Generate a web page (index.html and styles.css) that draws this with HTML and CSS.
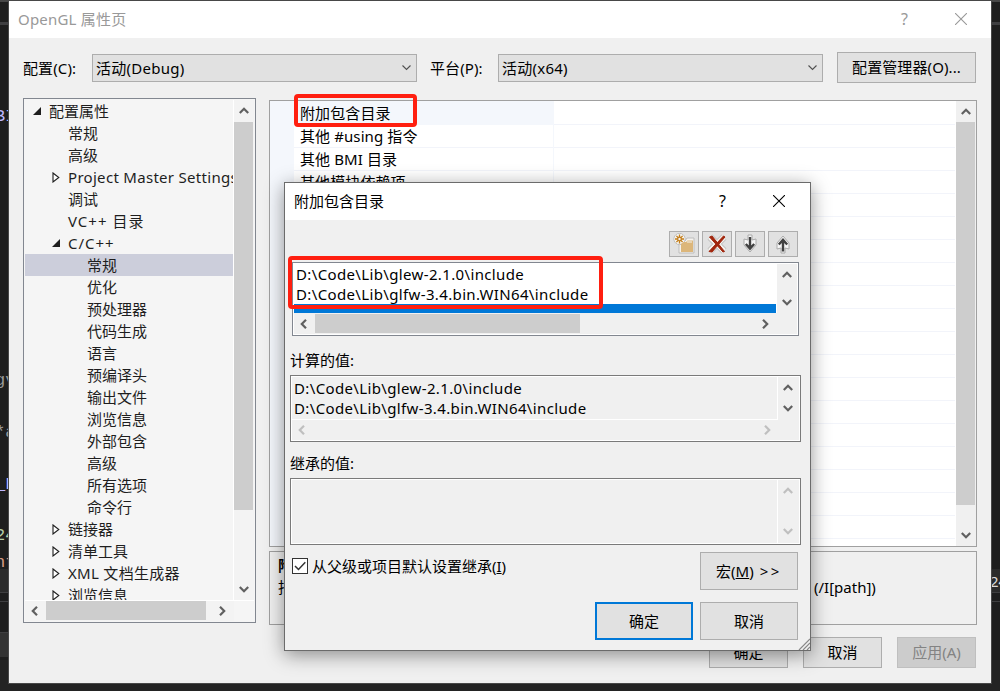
FILE: index.html
```
<!DOCTYPE html>
<html lang="zh-CN">

<head>
    <meta charset="utf-8">
    <title>OpenGL 属性页</title>
    <link rel="stylesheet" href="styles.css">
</head>

<body>
    <svg class="defs">
        <symbol id="up" viewBox="0 0 10 7"><path d="M0.8 6 L5 1.8 L9.2 6" fill="none" stroke="currentColor" stroke-width="2.2"/></symbol>
        <symbol id="down" viewBox="0 0 10 7"><path d="M0.8 1 L5 5.2 L9.2 1" fill="none" stroke="currentColor" stroke-width="2.2"/></symbol>
        <symbol id="left" viewBox="0 0 7 10"><path d="M6 0.8 L1.8 5 L6 9.2" fill="none" stroke="currentColor" stroke-width="2.2"/></symbol>
        <symbol id="right" viewBox="0 0 7 10"><path d="M1 0.8 L5.2 5 L1 9.2" fill="none" stroke="currentColor" stroke-width="2.2"/></symbol>
        <symbol id="close" viewBox="0 0 12 12"><path d="M0 0 L12 12 M12 0 L0 12" fill="none" stroke="currentColor" stroke-width="1.1"/></symbol>
        <symbol id="thin" viewBox="0 0 9 6"><path d="M0.5 0.5 L4.5 4.5 L8.5 0.5" fill="none" stroke="#505050" stroke-width="1.1"/></symbol>
        <symbol id="open" viewBox="0 0 8 8"><path d="M8 0 V8 H0 Z" fill="#1e1e1e"/></symbol>
        <symbol id="shut" viewBox="0 0 8 11"><path d="M1 1 L6.8 5.5 L1 10 Z" fill="#fff" stroke="#1e1e1e" stroke-width="1.1"/></symbol>
    </svg>

    <div class="editor">
        <div class="band band-top"></div>
        <div class="band band-tabs"></div>
        <div class="band band-status"></div>
        <div class="band band-output"></div>
        <div class="band band-foot"></div>
        <div class="band band-tool"></div>
        <span class="code c1">BI</span>
        <span class="code c2">gv</span>
        <span class="code c3">*a</span>
        <span class="code c4">_F</span>
        <span class="code c5">24</span>
        <span class="code c6">nt</span>
        <span class="code c7">24</span>
    </div>

    <div class="window main">
        <div class="titlebar">
            <span class="title">OpenGL 属性页</span>
            <span class="help">?</span>
            <svg class="close"><use href="#close"/></svg>
        </div>

        <div class="config">
            <label class="lbl-config">配置(C):</label>
            <div class="select">活动(Debug)<svg><use href="#thin"/></svg></div>
            <label class="lbl-platform">平台(P):</label>
            <div class="select">活动(x64)<svg><use href="#thin"/></svg></div>
            <div class="button manager">配置管理器(O)...</div>
        </div>

        <div class="panes">
            <div class="tree">
                <div class="tree-top">
                    <div class="items">
                        <div class="item root"><svg class="open"><use href="#open"/></svg>配置属性</div>
                        <div class="item">常规</div>
                        <div class="item">高级</div>
                        <div class="item latin"><svg class="shut"><use href="#shut"/></svg>Project Master Settings</div>
                        <div class="item">调试</div>
                        <div class="item symbols">VC++ 目录</div>
                        <div class="item symbols"><svg class="open"><use href="#open"/></svg>C/C++</div>
                        <div class="item sub selected">常规</div>
                        <div class="item sub">优化</div>
                        <div class="item sub">预处理器</div>
                        <div class="item sub">代码生成</div>
                        <div class="item sub">语言</div>
                        <div class="item sub">预编译头</div>
                        <div class="item sub">输出文件</div>
                        <div class="item sub">浏览信息</div>
                        <div class="item sub">外部包含</div>
                        <div class="item sub">高级</div>
                        <div class="item sub">所有选项</div>
                        <div class="item sub">命令行</div>
                        <div class="item"><svg class="shut"><use href="#shut"/></svg>链接器</div>
                        <div class="item"><svg class="shut"><use href="#shut"/></svg>清单工具</div>
                        <div class="item latin"><svg class="shut"><use href="#shut"/></svg>XML 文档生成器</div>
                        <div class="item"><svg class="shut"><use href="#shut"/></svg>浏览信息</div>
                    </div>
                    <div class="vscroll">
                        <svg class="v"><use href="#up"/></svg>
                        <div class="thumb"></div>
                        <svg class="v"><use href="#down"/></svg>
                    </div>
                </div>
                <div class="hscroll">
                    <svg class="h"><use href="#left"/></svg>
                    <div class="thumb"></div>
                    <svg class="h"><use href="#right"/></svg>
                </div>
            </div>

            <div class="right">
                <div class="grid">
                    <div class="gutter"></div>
                    <div class="rows">
                        <div class="row current">附加包含目录</div>
                        <div class="row">其他 #using 指令</div>
                        <div class="row">其他 BMI 目录</div>
                        <div class="row">其他模块依赖项</div>
                    </div>
                    <div class="vscroll">
                        <svg class="v"><use href="#up"/></svg>
                        <div class="thumb"></div>
                        <svg class="v"><use href="#down"/></svg>
                    </div>
                </div>
                <div class="description">
                    <b>附加包含目录</b>
                    <div class="desc-line"><span>指定</span><span>(/I[path])</span></div>
                </div>
            </div>
        </div>

        <div class="footer">
            <div class="button">确定</div>
            <div class="button">取消</div>
            <div class="button disabled">应用(A)</div>
        </div>
    </div>

    <div class="window dialog">
        <div class="titlebar">
            <span class="title">附加包含目录</span>
            <span class="help">?</span>
            <svg class="close"><use href="#close"/></svg>
        </div>

        <div class="toolbar">
            <div class="button">
                <svg viewBox="0 0 22 22">
                    <g fill="#f4f2ee" stroke="#bdbdbd" stroke-width="1"><path d="M6 8h6l2-3h7v15H6z"/><circle cx="6.5" cy="6" r="5.6"/></g>
                    <path d="M8 9h5l1.5-1.5H20V19H8z" fill="#dcb67a"/>
                    <path d="M14 9h5" stroke="#f4f2ee"/>
                    <circle cx="6.5" cy="6" r="5" fill="#f4f2ee"/>
                    <path d="M6.5 1.5v9M2 6h9M3.4 2.9l6.2 6.2M9.6 2.9l-6.2 6.2" stroke="#c27d1a" stroke-width="1.3"/>
                    <circle cx="6.5" cy="6" r="1.8" fill="#f4f2ee" stroke="#c27d1a" stroke-width="1.2"/>
                </svg>
            </div>
            <div class="button">
                <svg viewBox="0 0 22 22">
                    <path d="M4 4 L18 18 M18 4 L4 18" stroke="#b4b4b4" stroke-width="6.8"/>
                    <path d="M4 4 L18 18 M18 4 L4 18" stroke="#f4f2ee" stroke-width="5.4"/>
                    <path d="M3.5 4 L6 3 L18.5 18.5 L17 19 Z M17.5 3 L19 4 L6 19 L3 18.5 Z" fill="#a1260d" stroke="#a1260d"/>
                </svg>
            </div>
            <div class="button">
                <svg viewBox="0 0 22 22">
                    <path d="M9 2h4v5l4-1v6l-6 7l-6-7V6l4 1z" fill="#f6f6f6" stroke="#aaa"/>
                    <path d="M11 4v12M6.8 11l4.2 4.6l4.2-4.6" fill="none" stroke="#424242" stroke-width="2.4"/>
                </svg>
            </div>
            <div class="button">
                <svg viewBox="0 0 22 22">
                    <path d="M9 20h4v-5l4 1v-6l-6-7l-6 7v6l4-1z" fill="#f6f6f6" stroke="#aaa"/>
                    <path d="M11 18.5v-12M6.8 11.5l4.2-4.6l4.2 4.6" fill="none" stroke="#424242" stroke-width="2.4"/>
                </svg>
            </div>
        </div>

        <div class="listbox paths">
            <div class="list-top">
                <div class="lines">
                    <div>D:\Code\Lib\glew-2.1.0\include</div>
                    <div>D:\Code\Lib\glfw-3.4.bin.WIN64\include</div>
                    <div class="active"></div>
                </div>
                <div class="vscroll">
                    <svg class="v"><use href="#up"/></svg>
                    <svg class="v"><use href="#down"/></svg>
                </div>
            </div>
            <div class="hscroll">
                <svg class="h"><use href="#left"/></svg>
                <div class="thumb"></div>
                <svg class="h"><use href="#right"/></svg>
            </div>
        </div>

        <div class="caption">计算的值:</div>
        <div class="listbox readonly">
            <div class="list-top">
                <div class="lines">
                    <div>D:\Code\Lib\glew-2.1.0\include</div>
                    <div>D:\Code\Lib\glfw-3.4.bin.WIN64\include</div>
                </div>
                <div class="vscroll">
                    <svg class="v"><use href="#up"/></svg>
                    <svg class="v"><use href="#down"/></svg>
                </div>
            </div>
            <div class="hscroll off">
                <svg class="h"><use href="#left"/></svg>
                <svg class="h"><use href="#right"/></svg>
            </div>
        </div>

        <div class="caption caption-inherited">继承的值:</div>
        <div class="listbox readonly inherited">
            <div class="list-top">
                <div class="lines"></div>
                <div class="vscroll off">
                    <svg class="v"><use href="#up"/></svg>
                    <svg class="v"><use href="#down"/></svg>
                </div>
            </div>
        </div>

        <div class="options">
            <div class="checkbox">
                <svg viewBox="0 0 14 14"><path d="M2 7 L5.5 10.5 L12.3 3.3" fill="none" stroke="#333" stroke-width="1.5"/></svg>
            </div>
            <label>从父级或项目默认设置继承(<u>I</u>)</label>
            <div class="button">宏(<u>M</u>)<span class="more">&gt;&gt;</span></div>
        </div>
        <div class="actions">
            <div class="button default">确定</div>
            <div class="button">取消</div>
        </div>
        <svg class="grip" viewBox="0 0 12 12"><path d="M1 12 L12 1 M5 12 L12 5 M9 12 L12 9" stroke="#888" stroke-width="1.2"/></svg>
    </div>

    <div class="mark mark-property"></div>
    <div class="mark mark-paths"></div>
</body>

</html>
```

FILE: styles.css
```
* {
    box-sizing: border-box;
}

body {
    margin: 0;
    width: 1000px;
    height: 691px;
    position: relative;
    overflow: hidden;
    background-color: #1e1e1e;
    color: #000000;
    font-family: "Noto Sans", "Noto Sans CJK SC", sans-serif;
    font-size: 15px;
    line-height: 20px;
    white-space: nowrap;
}

svg {
    display: block;
    flex: none;
}

.defs {
    position: absolute;
    width: 0;
    height: 0;
}

/* editor behind the windows */
.band {
    position: absolute;
    left: 0;
    width: 1000px;
}

.band-top {
    top: 0;
    height: 2px;
    background-color: #474747;
}

.band-tabs {
    top: 22px;
    height: 3px;
    background-color: #3f3f41;
}

.band-status {
    top: 569px;
    height: 24px;
    background-color: #2b2b2b;
    border-bottom: 1px solid #3f3f41;
}

.band-output {
    top: 601px;
    height: 31px;
    background-color: #1e1e1e;
    border-top: 1px solid #3f3f41;
}

.band-foot {
    top: 660px;
    height: 31px;
    background-color: #232323;
}

.band-tool {
    top: 632px;
    width: 9px;
    height: 25px;
    background-color: #333333;
    border-top: 1px solid #3f3f41;
}

.code {
    position: absolute;
    left: -5px;
    font-family: "Liberation Mono", monospace;
    font-size: 17px;
}

.c1 { top: 107px; color: #beb7ff; }
.c2 { top: 371px; color: #9a9a9a; }
.c3 { top: 423px; color: #9a9a9a; }
.c4 { top: 475px; color: #beb7ff; }
.c5 { top: 526px; color: #b5cea8; }
.c6 { top: 553px; color: #d69d85; }
.c7 { top: 571px; left: 990px; color: #dcdcdc; font-family: "Noto Sans", sans-serif; font-size: 15px; }

/* windows */
.window {
    position: absolute;
    background-color: #f0f0f0;
}

.main {
    left: 8px;
    top: 0;
    width: 984px;
    height: 684px;
    border: 1px solid #484848;
}

.titlebar {
    display: flex;
    align-items: center;
    height: 37px;
    padding: 0 25px 2px 0;
    background-color: #ffffff;
}

.title {
    flex: 1;
    padding-left: 9px;
}

.help {
    margin-right: 47px;
    font-size: 16px;
}

.close {
    width: 12px;
    height: 12px;
}

.main .titlebar {
    padding-right: 24px;
    color: #999999;
}

.main .title {
    letter-spacing: 0.2px;
}

.button {
    display: flex;
    align-items: center;
    justify-content: center;
    background-color: #e1e1e1;
    border: 1px solid #adadad;
}

.config {
    display: flex;
    align-items: center;
    height: 31px;
    margin: 14px 14px 0;
}

.lbl-config {
    width: 69px;
    letter-spacing: 0.1px;
}

.lbl-platform {
    width: 68px;
    margin-left: 13px;
    letter-spacing: 0.1px;
}

.select {
    display: flex;
    align-items: center;
    justify-content: space-between;
    width: 325px;
    height: 28px;
    margin-top: 1px;
    padding: 0 5px 0 3px;
    background-color: #e1e1e1;
    border: 1px solid #adadad;
    letter-spacing: 0.25px;
}

.select svg {
    width: 9px;
    height: 6px;
}

.manager {
    width: 139px;
    height: 31px;
    margin-left: 14px;
    padding-bottom: 2px;
    letter-spacing: 0.1px;
}

.panes {
    display: flex;
    gap: 13px;
    margin: 15px 14px 0;
}

/* scrollbars */
.vscroll {
    display: flex;
    flex-direction: column;
    align-items: center;
    justify-content: space-between;
    flex: none;
    width: 20px;
    background-color: #f0f0f0;
    color: #606060;
}

.hscroll {
    display: flex;
    align-items: center;
    justify-content: space-between;
    height: 20px;
    background-color: #f0f0f0;
    color: #606060;
}

.off {
    color: #bfbfbf;
}

.thumb {
    background-color: #cdcdcd;
}

.vscroll .thumb {
    width: 19px;
}

.hscroll .thumb {
    height: 19px;
}

.v {
    width: 10px;
    height: 7px;
}

.h {
    width: 7px;
    height: 10px;
}

/* property tree */
.tree {
    width: 233px;
    height: 525px;
    padding: 1px;
    background-color: #f5f5f5;
    border: 1px solid #828790;
}

.tree-top {
    display: flex;
    height: 501px;
    border-bottom: 1px solid #ffffff;
}

.items {
    width: 209px;
    overflow: hidden;
    border-right: 1px solid #ffffff;
    color: #1e1e1e;
}

.item {
    display: flex;
    align-items: center;
    height: 22px;
    padding-left: 43px;
}

.item svg {
    width: 8px;
    height: 8px;
    margin: 0 8px 0 -16px;
}

.item .shut {
    height: 11px;
}

.latin {
    letter-spacing: 0.3px;
}

.symbols {
    letter-spacing: 1px;
}

.root {
    padding-left: 24px;
}

.sub {
    padding-left: 62px;
}

.selected {
    background-color: #cccedb;
}

.tree .vscroll {
    padding: 7px 1px 7px 0;
}

.tree .vscroll .thumb {
    height: 388px;
    margin-bottom: 69px;
}

.tree .hscroll {
    width: 209px;
    height: 20px;
    padding: 0 8px 1px 6px;
}

.tree .hscroll .thumb {
    width: 160px;
    margin-right: 5px;
}

.tree .hscroll,
.tree .vscroll {
    background-color: #f3f3f3;
}

/* property grid */
.right {
    width: 708px;
    padding-top: 2px;
}

.grid {
    display: flex;
    height: 447px;
    border: 1px solid #a0a0a0;
    background-color: #ffffff;
}

.gutter {
    width: 24px;
    background-color: #f4f7fc;
}

.rows {
    width: 661px;
    margin-right: 1px;
    background-image: linear-gradient(90deg, transparent 259px, #f4f7fc 259px, #f4f7fc 260px, transparent 260px),
        repeating-linear-gradient(#ffffff 0, #ffffff 22px, #f2f4fa 22px, #f2f4fa 23px);
    background-position: 0 0, 0 1px;
}

.row {
    height: 23px;
    padding: 1px 0 0 6px;
    letter-spacing: 0.1px;
}

.current {
    width: 259px;
    height: 24px;
    padding-top: 2px;
    background-color: #f4f7fc;
}

.grid .vscroll {
    padding: 7px 1px 7px 0;
}

.grid .thumb {
    height: 383px;
    margin-bottom: 20px;
}

.description {
    height: 74px;
    margin-top: 4px;
    padding: 3px 8px;
    border: 1px solid #a0a0a0;
    overflow: hidden;
}

.desc-line {
    display: flex;
    margin-top: 2px;
}

.desc-line span:first-child {
    width: 536px;
}

.footer {
    display: flex;
    justify-content: flex-end;
    gap: 15px;
    margin: 12px 15px 0;
}

.footer .button {
    width: 79px;
    height: 31px;
    padding-bottom: 1px;
}

.footer .disabled {
    background-color: #cccccc;
    border-color: #bfbfbf;
    color: #838383;
}

/* include directories dialog */
.dialog {
    left: 284px;
    top: 182px;
    width: 527px;
    height: 469px;
    border: 1px solid #6b6b6b;
    box-shadow: 0 4px 18px rgba(0, 0, 0, 0.42);
}

.toolbar {
    display: flex;
    justify-content: flex-end;
    gap: 3px;
    margin: 11px 12px 0 0;
}

.toolbar .button {
    width: 30px;
    height: 26px;
}

.toolbar svg {
    width: 22px;
    height: 22px;
}

.listbox {
    width: 511px;
    height: 67px;
    margin-left: 5px;
    padding: 1px;
    border: 1px solid #7a7a7a;
    background-color: #ffffff;
}

.list-top {
    display: flex;
}

.lines {
    flex: 1;
    overflow: hidden;
    letter-spacing: 0.36px;
}

.lines div {
    height: 20px;
    padding-left: 2px;
}

.paths {
    width: 507px;
    height: 74px;
    margin: 5px 0 0 7px;
    border-color: #828790;
}

.paths .list-top {
    height: 49px;
}

.paths .lines {
    margin-right: 1px;
}

.paths .lines .active {
    height: 9px;
    background-color: #0078d7;
}

.paths .vscroll {
    padding: 7px 1px 7px 0;
}

.paths .hscroll {
    height: 21px;
    padding: 0 28px 0 6px;
}

.paths .thumb {
    width: 265px;
    margin-right: 174px;
}

.caption {
    margin: 14px 0 5px 5px;
}

.caption-inherited {
    margin-top: 11px;
}

.readonly .list-top {
    height: 43px;
}

.readonly .lines {
    margin: 0 1px 1px 0;
    padding-top: 1px;
    background-color: #f0f0f0;
}

.readonly .vscroll {
    width: 21px;
    padding: 7px 2px 8px 0;
}

.readonly .hscroll {
    padding: 0 28px 0 6px;
}

.readonly.inherited .list-top {
    height: 63px;
}

.readonly.inherited .lines {
    margin-bottom: 0;
}

.options {
    display: flex;
    align-items: center;
    margin: 7px 12px 0 7px;
}

.checkbox {
    width: 16px;
    height: 16px;
    margin: -10px 4px 0 0;
    background-color: #ffffff;
    border: 1px solid #333333;
}

.options label {
    flex: 1;
    margin-top: -10px;
}

.options .button,
.actions .button {
    width: 98px;
    height: 38px;
}

.more {
    margin-left: 6px;
    letter-spacing: 2.5px;
}

.actions {
    display: flex;
    justify-content: flex-end;
    gap: 7px;
    margin: 12px 12px 0 0;
}

.actions .default {
    border: 2px solid #0078d7;
}

.grip {
    position: absolute;
    right: 0;
    bottom: 0;
    width: 12px;
    height: 12px;
}

/* red highlight boxes */
.mark {
    position: absolute;
    border: 4px solid #ff1f10;
    border-radius: 4px;
}

.mark-property {
    left: 294px;
    top: 94px;
    width: 123px;
    height: 33px;
}

.mark-paths {
    left: 288px;
    top: 256px;
    width: 315px;
    height: 53px;
}
```
